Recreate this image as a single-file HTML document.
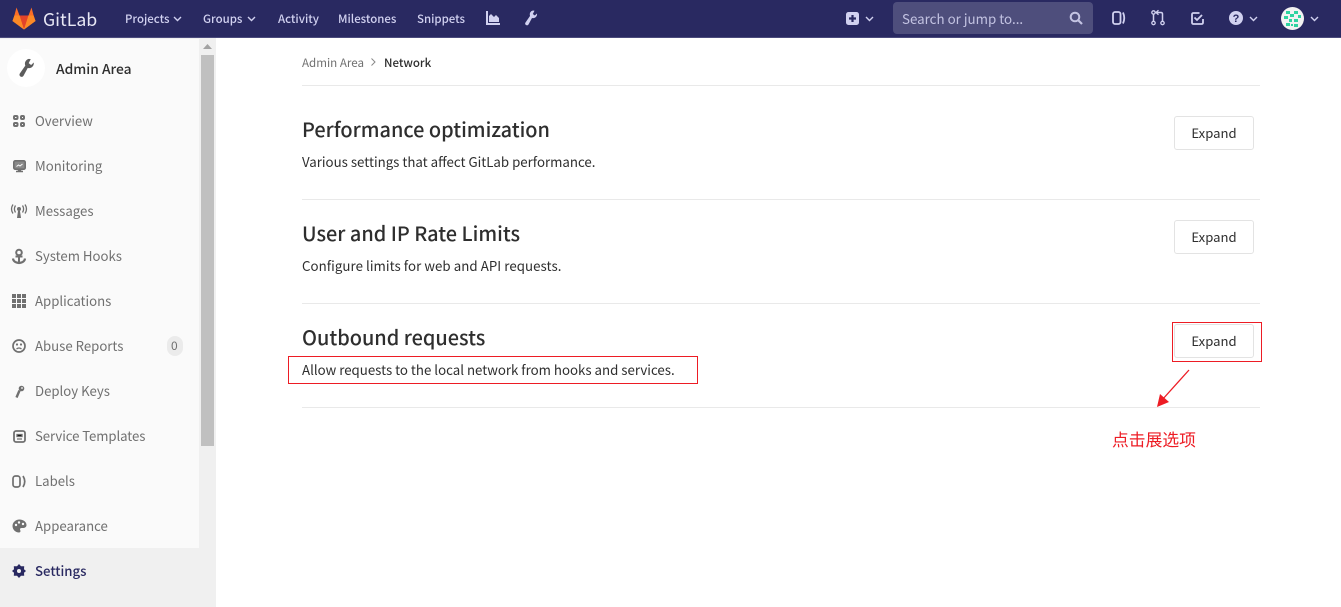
<!DOCTYPE html>
<html><head><meta charset="utf-8">
<style>
*{box-sizing:border-box;margin:0;padding:0}
html,body{width:1341px;height:607px;overflow:hidden;background:#fff;font-family:"Noto Sans CJK SC","Liberation Sans",sans-serif}
.t{position:absolute;white-space:nowrap;line-height:20px}
.a{position:absolute}
.nav{font-size:11.45px;font-weight:500;color:#d1d1f0}
.side{font-size:13.2px;color:#707070;left:35px}
.h{font-size:19.9px;font-weight:500;color:#2e2e2e;left:302px;line-height:28px}
.p{font-size:13.28px;color:#2e2e2e;left:302px}
.btn{position:absolute;left:1174px;width:80px;height:34px;border:1px solid #e3e3e3;border-radius:3px;background:#fff;font-size:13.1px;color:#2e2e2e;text-align:center;line-height:31px}
.hr{position:absolute;left:302px;width:958px;height:1px;background:#e9e9e9}
svg{position:absolute;overflow:visible}
</style></head><body>
<div class="a" style="left:0;top:0;width:1341px;height:38px;background:#292961;border-bottom:1px solid #4b4b7c"></div>

<svg style="left:12px;top:7px" width="24" height="23" viewBox="0 0 24 23"><path d="M12 22.500 L0.500 14 L2.500 8 L4.500 0.500 L7.500 8.500 H16.500 L19.500 0.500 L21.500 8 L23.500 14Z" fill="#fc6d26"/><path d="M12 22.500 L7.500 8.500 H16.500Z" fill="#e24329"/><path d="M12 22.500 L0.500 14 L2.500 8.500 H7.500Z" fill="#fc6d26"/><path d="M12 22.500 L23.500 14 L21.500 8.500 H16.500Z" fill="#fc6d26"/><path d="M0.500 14 L2.500 8.500 L7.500 8.500 L12 22.500Z" fill="#fca326" opacity=".55"/><path d="M23.500 14 L21.500 8.500 L16.500 8.500 L12 22.500Z" fill="#fca326" opacity=".55"/></svg>
<div class="t" style="left:43px;top:8px;font-size:17.7px;color:#e8e8f5;line-height:22px">GitLab</div>

<div class="t nav" style="left:125px;top:9px">Projects</div>
<svg style="left:173px;top:16px" width="9" height="6"><path d="M1 1l3.500 3.500L8 1" fill="none" stroke="#d1d1f0" stroke-width="1.400"/></svg>
<div class="t nav" style="left:203px;top:9px">Groups</div>
<svg style="left:247px;top:16px" width="9" height="6"><path d="M1 1l3.500 3.500L8 1" fill="none" stroke="#d1d1f0" stroke-width="1.400"/></svg>
<div class="t nav" style="left:278px;top:9px">Activity</div>
<div class="t nav" style="left:338px;top:9px">Milestones</div>
<div class="t nav" style="left:417px;top:9px">Snippets</div>
<svg style="left:486px;top:11px" width="14" height="14"><path d="M1 0v13h13" fill="none" stroke="#d1d1f0" stroke-width="2"/><path d="M3 11V5l2-2 3 3 2-2 3 3v4z" fill="#d1d1f0"/></svg>
<svg style="left:524px;top:10px" width="14" height="16" viewBox="0 0 14 16"><path d="M9 .5a4 4 0 0 0-3 5.500L1.500 12.500a1.800 1.800 0 0 0 3 2L8 8a4 4 0 0 0 5-4.500L10.800 5.500 8.800 4l1.700-3.300z" fill="#d1d1f0"/></svg>

<svg style="left:846px;top:12px" width="13" height="13"><rect width="13" height="13" rx="2.500" fill="#d1d1f0"/><path d="M6.500 3v7M3 6.500h7" stroke="#292961" stroke-width="2.200"/></svg>
<svg style="left:865px;top:16px" width="9" height="6"><path d="M1 1l3.500 3.500L8 1" fill="none" stroke="#d1d1f0" stroke-width="1.400"/></svg>
<div class="a" style="left:893px;top:2px;width:200px;height:32px;background:#4e4e7c;border-radius:4px"></div>
<div class="t" style="left:902px;top:9px;font-size:13.35px;color:#c3c3e2">Search or jump to...</div>
<svg style="left:1069px;top:11px" width="14" height="14"><circle cx="6" cy="6" r="4.300" fill="none" stroke="#c3c3e2" stroke-width="2"/><path d="M9 9l4 4" stroke="#c3c3e2" stroke-width="2.200"/></svg>
<svg style="left:1112px;top:11px" width="14" height="14"><rect x="1" y="1" width="7.500" height="12" rx="2" fill="none" stroke="#d1d1f0" stroke-width="1.800"/><path d="M11 1.500q2.500 5.500 0 11" fill="none" stroke="#d1d1f0" stroke-width="1.800"/></svg>
<svg style="left:1151px;top:10px" width="14" height="16"><circle cx="2.500" cy="13" r="1.700" fill="none" stroke="#d1d1f0" stroke-width="1.300"/><circle cx="2.500" cy="2.500" r="1.700" fill="none" stroke="#d1d1f0" stroke-width="1.300"/><circle cx="11.500" cy="13" r="1.700" fill="none" stroke="#d1d1f0" stroke-width="1.300"/><path d="M2.500 4.500v6.500M11.500 11V4q0-1.500-1.500-1.500H6" fill="none" stroke="#d1d1f0" stroke-width="1.500"/><path d="M7.500 .3L5 2.500l2.500 2.200" fill="none" stroke="#d1d1f0" stroke-width="1.300"/></svg>
<svg style="left:1191px;top:12px" width="13" height="13"><path d="M8.500 1H2.500Q1 1 1 2.500v8Q1 12 2.500 12h8q1.500 0 1.500-1.500V7" fill="none" stroke="#d1d1f0" stroke-width="1.800"/><path d="M3.500 5.500l2.500 2.500 5-5" fill="none" stroke="#d1d1f0" stroke-width="1.800"/></svg>
<svg style="left:1229px;top:11px" width="14" height="14"><circle cx="7" cy="7" r="7" fill="#d1d1f0"/><text x="7" y="11" text-anchor="middle" font-size="11" font-weight="700" fill="#292961" font-family="Liberation Sans">?</text></svg>
<svg style="left:1249px;top:16px" width="9" height="6"><path d="M1 1l3.500 3.500L8 1" fill="none" stroke="#d1d1f0" stroke-width="1.400"/></svg>
<svg style="left:1281px;top:7px" width="23" height="23"><circle cx="11.500" cy="11.500" r="11.500" fill="#f2f2f2"/><g fill="#2ed3a0"><rect x="5" y="4" width="4" height="3"/><rect x="13" y="4" width="4" height="3"/><rect x="9" y="7" width="4" height="3"/><rect x="17" y="8" width="3" height="3"/><rect x="3" y="9" width="4" height="3"/><rect x="8" y="12" width="3" height="3"/><rect x="13" y="12" width="4" height="3"/><rect x="5" y="16" width="4" height="3"/><rect x="13" y="17" width="4" height="3"/><rect x="10" y="17" width="2" height="2"/></g></svg>
<svg style="left:1310px;top:16px" width="9" height="6"><path d="M1 1l3.500 3.500L8 1" fill="none" stroke="#d1d1f0" stroke-width="1.400"/></svg>

<div class="a" style="left:0;top:38px;width:216px;height:569px;background:#f0f0f0"></div>
<div class="a" style="left:0;top:39px;width:199px;height:509px;background:#fafafa"></div>
<div class="a" style="left:201px;top:55px;width:13px;height:391px;background:#c0c0c0"></div>
<svg style="left:203px;top:44px" width="9" height="5"><path d="M4.500 0L9 5H0z" fill="#a3a3a3"/></svg>

<div class="a" style="left:7px;top:49px;width:38px;height:38px;border-radius:50%;background:#fff"></div>
<svg style="left:18px;top:58px" width="17" height="20" viewBox="0 0 14 16"><path d="M9 .5a4 4 0 0 0-3 5.500L1.500 12.500a1.800 1.800 0 0 0 3 2L8 8a4 4 0 0 0 5-4.500L10.800 5.500 8.800 4l1.700-3.300z" fill="#5c5c5c"/></svg>
<div class="t" style="left:56px;top:58px;font-size:13.8px;font-weight:500;color:#2e2e2e;line-height:21px">Admin Area</div>

<svg style="left:13px;top:115px" width="12" height="12"><g fill="none" stroke="#707070" stroke-width="2"><rect x="1" y="1" width="3.500" height="3" rx="1"/><rect x="8" y="1" width="3" height="3" rx="1"/><rect x="1" y="8" width="3.500" height="3" rx="1"/><rect x="8" y="8" width="3" height="3" rx="1"/></g></svg>
<div class="t side" style="top:111px">Overview</div>
<svg style="left:13px;top:160px" width="13" height="13"><rect x=".8" y=".8" width="11.400" height="8.400" rx="1.500" fill="#8a8a8a" stroke="#707070" stroke-width="1.600"/><path d="M3.500 6.500l2-1.500 1.500 1 2.500-2" fill="none" stroke="#fafafa"/><path d="M5.500 9.500h2V11h-2zM3 11.500h7" stroke="#707070" stroke-width="1.500"/></svg>
<div class="t side" style="top:156px">Monitoring</div>
<svg style="left:11px;top:204px" width="16" height="15"><circle cx="8" cy="5" r="2" fill="#707070"/><path d="M7 7h2l1 7H6z" fill="#707070"/><path d="M4.500 1.500q-2.200 3.500 0 7M11.500 1.500q2.200 3.500 0 7M2 .5q-3 4.500 0 9M14 .5q3 4.500 0 9" fill="none" stroke="#707070" stroke-width="1.300"/></svg>
<div class="t side" style="top:201px">Messages</div>
<svg style="left:12px;top:249px" width="14" height="15"><circle cx="7" cy="3.500" r="2.800" fill="none" stroke="#707070" stroke-width="2"/><path d="M3.500 7.500h7M7 6v8" stroke="#707070" stroke-width="2"/><path d="M1 9.500q.5 4 6 4.500 5.500-.5 6-4.500" fill="none" stroke="#707070" stroke-width="2.200"/></svg>
<div class="t side" style="top:246px">System Hooks</div>
<svg style="left:12px;top:294px" width="14" height="14" fill="#707070"><rect width="4" height="4"/><rect x="5" width="4" height="4"/><rect x="10" width="4" height="4"/><rect y="5" width="4" height="4"/><rect x="5" y="5" width="4" height="4"/><rect x="10" y="5" width="4" height="4"/><rect y="10" width="4" height="4"/><rect x="5" y="10" width="4" height="4"/><rect x="10" y="10" width="4" height="4"/></svg>
<div class="t side" style="top:291px">Applications</div>
<svg style="left:12px;top:339px" width="14" height="14"><circle cx="7" cy="7" r="6" fill="none" stroke="#707070" stroke-width="1.700"/><circle cx="5" cy="5.500" r="1.100" fill="#707070"/><circle cx="9" cy="5.500" r="1.100" fill="#707070"/><path d="M4.500 10q2.500-2 5 0" fill="none" stroke="#707070" stroke-width="1.300"/></svg>
<div class="t side" style="top:336px">Abuse Reports</div>
<div class="a" style="left:167px;top:336px;width:16px;height:20px;border-radius:8px;background:#ebebeb"></div>
<div class="t" style="left:171px;top:336px;font-size:12px;color:#707070;line-height:20px">0</div>
<svg style="left:15px;top:385px" width="10" height="13"><circle cx="6.500" cy="3.500" r="2.800" fill="#707070"/><circle cx="7" cy="3" r=".9" fill="#fafafa"/><path d="M4.500 5.500L1.500 12.500" stroke="#707070" stroke-width="2.400"/></svg>
<div class="t side" style="top:381px">Deploy Keys</div>
<svg style="left:13px;top:430px" width="13" height="13"><rect x="1" y="1" width="11" height="11" rx="2" fill="none" stroke="#707070" stroke-width="1.800"/><path d="M4 4.500h5v2H4zM4 9h5" stroke="#707070" stroke-width="1.300"/></svg>
<div class="t side" style="top:426px;letter-spacing:-.08px">Service Templates</div>
<svg style="left:12px;top:475px" width="15" height="13"><rect x="1" y="1" width="7" height="11" rx="2.500" fill="none" stroke="#707070" stroke-width="1.700"/><path d="M11 1q3.500 5.500 0 11" fill="none" stroke="#707070" stroke-width="1.700"/></svg>
<div class="t side" style="top:471px">Labels</div>
<svg style="left:12px;top:519px" width="15" height="14"><path d="M7.500.5C3.500.5.500 3.500.500 7s3 6.500 6.500 6.500c2 0 1.500-2 1-3 0-1.500 1-1.500 2.500-1.500 2.500 0 4-1 4-3C14.500 3 11.500.5 7.500.5z" fill="#707070"/><circle cx="4" cy="6" r="1.200" fill="#fafafa"/><circle cx="7" cy="3.500" r="1.200" fill="#fafafa"/><circle cx="11" cy="5" r="1.200" fill="#fafafa"/></svg>
<div class="t side" style="top:516px">Appearance</div>
<svg style="left:12px;top:564px" width="14" height="14" viewBox="0 0 14 14"><path d="M7 0l2 2.200h3.200l-.2 3L14 7l-2 1.800.2 3H9L7 14l-2-2.200H1.800l.2-3L0 7l2-1.800-.2-3H5z" fill="#292961"/><circle cx="7" cy="7" r="2" fill="#f0f0f0"/></svg>
<div class="t side" style="top:561px;color:#292961;font-weight:500;font-size:13.2px">Settings</div>

<div class="t" style="left:302px;top:53px;font-size:11.6px;color:#707070">Admin Area</div>
<svg style="left:371px;top:58px" width="5" height="8"><path d="M.5.500L4 4 .5 7.500" fill="none" stroke="#888"/></svg>
<div class="t" style="left:384px;top:53px;font-size:11.5px;font-weight:500;color:#2e2e2e">Network</div>
<div class="hr" style="top:85px"></div>

<div class="t h" style="top:115px">Performance optimization</div>
<div class="t p" style="top:152px">Various settings that affect GitLab performance.</div>
<div class="btn" style="top:116px">Expand</div>
<div class="hr" style="top:199px"></div>

<div class="t h" style="top:219px">User and IP Rate Limits</div>
<div class="t p" style="top:256px;letter-spacing:.06px">Configure limits for web and API requests.</div>
<div class="btn" style="top:220px">Expand</div>
<div class="hr" style="top:303px"></div>

<div class="t h" style="top:323px">Outbound requests</div>
<div class="t p" style="top:360px">Allow requests to the local network from hooks and services.</div>
<div class="btn" style="top:324px">Expand</div>
<div class="hr" style="top:407px"></div>

<div class="a" style="left:288px;top:356px;width:410px;height:28px;border:1px solid #ed1c24"></div>
<div class="a" style="left:1172px;top:322px;width:90px;height:40px;border:1px solid #ed1c24"></div>
<svg style="left:1150px;top:365px" width="45" height="45"><path d="M39 5L12 35" stroke="#ed1c24" stroke-width="1.300"/><path d="M7 42L10 29 19 37z" fill="#ed1c24"/></svg>
<div class="t" style="left:1112px;top:428px;font-size:16.8px;color:#ed1c24;line-height:22px;font-family:'Noto Sans CJK SC',sans-serif">点击展选项</div>
</body></html>
